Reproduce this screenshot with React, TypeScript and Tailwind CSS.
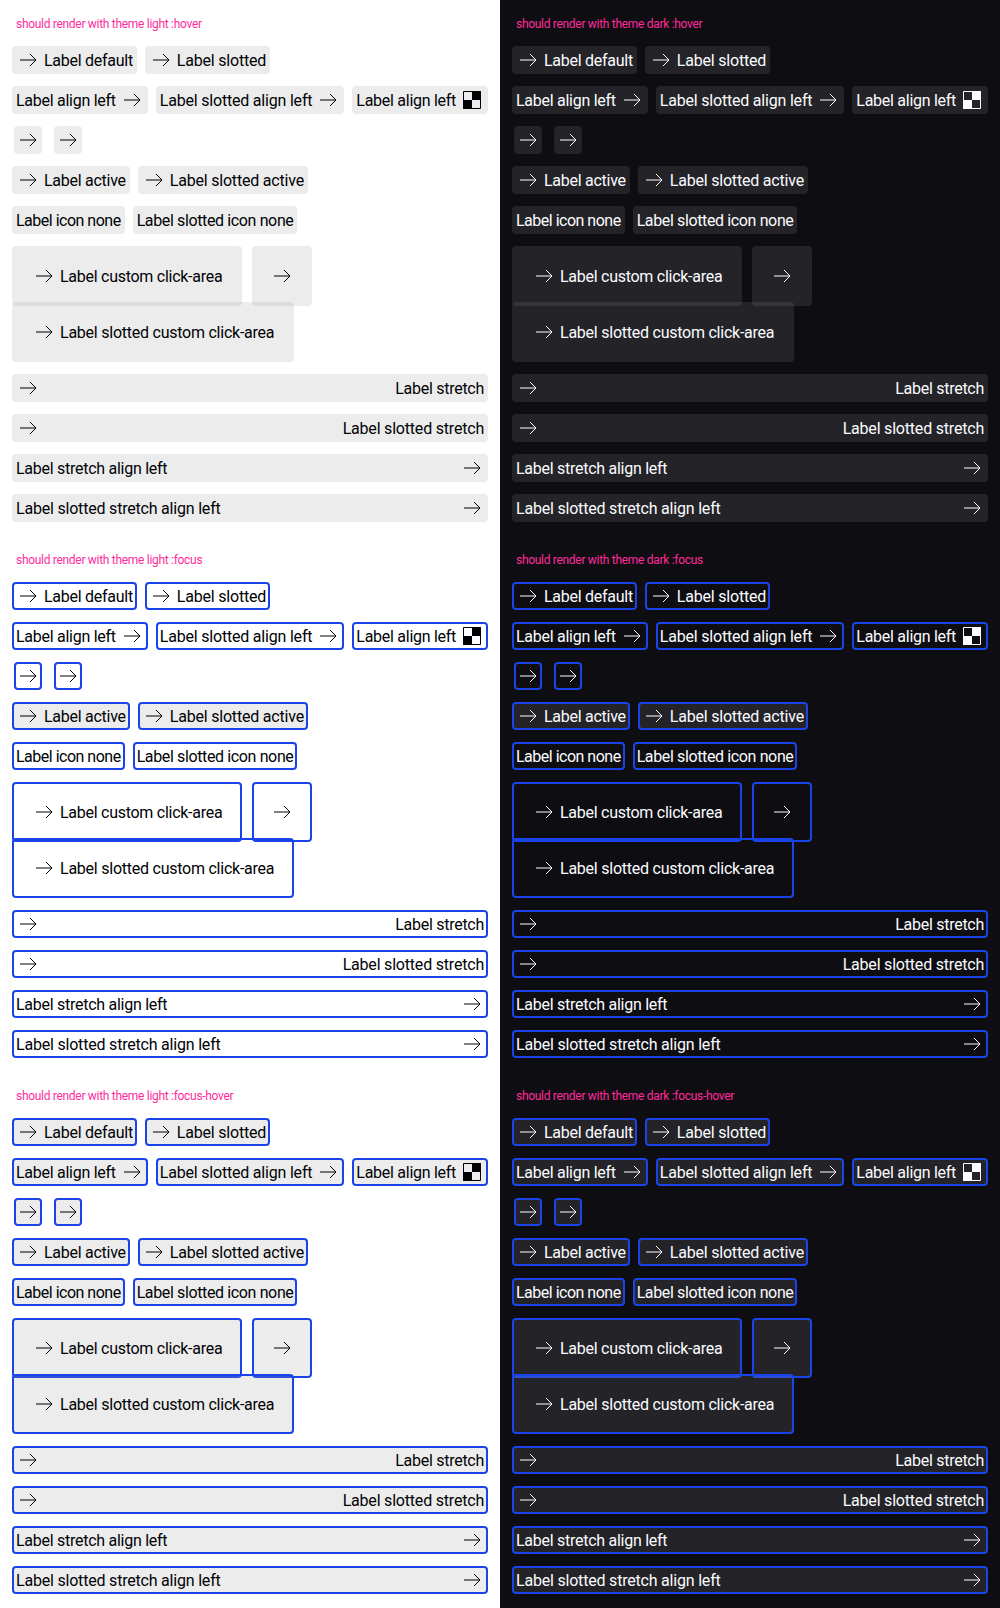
import React from "react";

type Theme = "light" | "dark";
type State = "hover" | "focus" | "focus-hover";

const ArrowIcon = () => (
  <svg viewBox="0 0 24 24" fill="none" stroke="currentColor" strokeWidth="1" className="size-6 shrink-0">
    <path d="M4 12h16M14 6l6 6-6 6" />
  </svg>
);

const CheckerIcon = () => (
  <svg viewBox="0 0 24 24" className="size-6 shrink-0">
    <path d="M3.5 3.5h17v17h-17z" fill="none" stroke="currentColor" strokeWidth="1" />
    <path d="M12 3h9v9h-9zM3 12h9v9H3z" fill="currentColor" />
  </svg>
);

const LinkButton = ({
  theme,
  state,
  label,
  icon = "arrow",
  iconRight = false,
  active = false,
  stretch = false,
  big = false,
  tracking = "",
}: {
  theme: Theme;
  state: State;
  label?: string;
  icon?: "arrow" | "checker" | "none";
  iconRight?: boolean;
  active?: boolean;
  stretch?: boolean;
  big?: boolean;
  tracking?: string;
}) => {
  const showBg = state !== "focus" || active;
  const bg = !showBg ? "bg-transparent" : theme === "light" ? "bg-[rgba(148,149,152,0.18)]" : "bg-[rgba(126,127,130,0.2)]";
  const border = state === "hover" ? "border-transparent" : "border-[#1a44ea]";
  const pad = !label ? (big ? "px-4 py-4" : "") : big ? "px-[18px] py-4" : "px-0.5";
  const width = stretch ? "w-full justify-between" : "w-fit";
  const iconEl = icon === "arrow" ? <ArrowIcon /> : icon === "checker" ? <CheckerIcon /> : null;

  return (
    <div className={`flex items-center gap-1 rounded border-2 leading-6 whitespace-nowrap ${bg} ${border} ${pad} ${width}`}>
      {!iconRight && iconEl}
      {label && <span className={`translate-y-px ${tracking}`}>{label}</span>}
      {iconRight && iconEl}
    </div>
  );
};

const slotted = "tracking-[-0.2px]";

const Section = ({ theme, state }: { theme: Theme; state: State }) => {
  const p = { theme, state };
  return (
    <section className="flex flex-col">
      <h2 className="ml-1 h-4 text-xs leading-4 text-[#ff2b9d] tracking-[-0.3px] mb-3.5">
        should render with theme {theme} :{state}
      </h2>
      <div className="flex flex-col gap-3">
        <div className="flex gap-2">
          <LinkButton {...p} label="Label default" />
          <LinkButton {...p} label="Label slotted" tracking={slotted} />
        </div>
        <div className="flex gap-2">
          <LinkButton {...p} label="Label align left" iconRight />
          <LinkButton {...p} label="Label slotted align left" iconRight tracking={slotted} />
          <LinkButton {...p} label="Label align left" icon="checker" iconRight />
        </div>
        <div className="flex gap-3 ml-0.5">
          <LinkButton {...p} />
          <LinkButton {...p} />
        </div>
        <div className="flex gap-2">
          <LinkButton {...p} label="Label active" active />
          <LinkButton {...p} label="Label slotted active" active tracking={slotted} />
        </div>
        <div className="flex gap-2">
          <LinkButton {...p} label="Label icon none" icon="none" tracking="tracking-[-0.5px]" />
          <LinkButton {...p} label="Label slotted icon none" icon="none" tracking="tracking-[-0.37px]" />
        </div>
        <div className="flex flex-col">
          <div className="flex gap-2.5">
            <LinkButton {...p} label="Label custom click-area" big />
            <LinkButton {...p} big />
          </div>
          <div className="-mt-1">
            <LinkButton {...p} label="Label slotted custom click-area" big tracking="tracking-[-0.24px]" />
          </div>
        </div>
        <LinkButton {...p} label="Label stretch" stretch />
        <LinkButton {...p} label="Label slotted stretch" stretch tracking={slotted} />
        <LinkButton {...p} label="Label stretch align left" iconRight stretch />
        <LinkButton {...p} label="Label slotted stretch align left" iconRight stretch tracking={slotted} />
      </div>
    </section>
  );
};

const states: State[] = ["hover", "focus", "focus-hover"];

const Panel = ({ theme }: { theme: Theme }) => (
  <div className={`flex flex-col gap-[30px] px-3 pt-4 pb-3.5 ${theme === "light" ? "bg-white text-[#010205]" : "bg-[#0e0e12] text-[#fbfcff]"}`}>
    {states.map((state) => (
      <Section key={state} theme={theme} state={state} />
    ))}
  </div>
);

export default function App() {
  return (
    <div className="grid grid-cols-2 w-[1000px] font-['Roboto',sans-serif] text-base tracking-[-0.27px]">
      <Panel theme="light" />
      <Panel theme="dark" />
    </div>
  );
}
